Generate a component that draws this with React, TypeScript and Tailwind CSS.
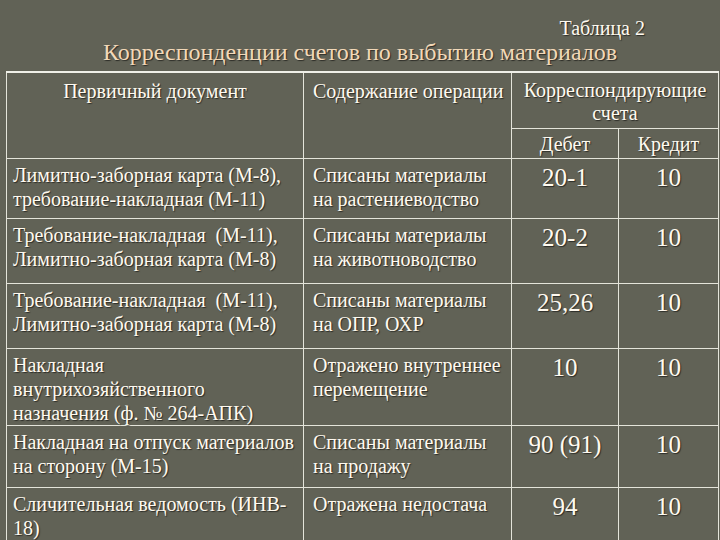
const rows = [
  {
    doc: ['Лимитно-заборная карта (М-8),', 'требование-накладная (М-11)'],
    op: ['Списаны материалы', 'на растениеводство'],
    debit: '20-1',
    credit: '10',
    h: 'h-[60px]',
  },
  {
    doc: ['Требование-накладная  (М-11),', 'Лимитно-заборная карта (М-8)'],
    op: ['Списаны материалы', 'на животноводство'],
    debit: '20-2',
    credit: '10',
    h: 'h-[65px]',
  },
  {
    doc: ['Требование-накладная  (М-11),', 'Лимитно-заборная карта (М-8)'],
    op: ['Списаны материалы', 'на ОПР, ОХР'],
    debit: '25,26',
    credit: '10',
    h: 'h-[65px]',
  },
  {
    doc: ['Накладная', 'внутрихозяйственного', 'назначения (ф. № 264-АПК)'],
    op: ['Отражено внутреннее', 'перемещение'],
    debit: '10',
    credit: '10',
    h: 'h-[77px]',
  },
  {
    doc: ['Накладная на отпуск материалов', 'на сторону (М-15)'],
    op: ['Списаны материалы', 'на продажу'],
    debit: '90 (91)',
    credit: '10',
    h: 'h-[62px]',
  },
  {
    doc: ['Сличительная ведомость (ИНВ-', '18)'],
    op: ['Отражена недостача'],
    debit: '94',
    credit: '10',
    h: 'h-[60px]',
  },
]

function Lines({ lines }: { lines: string[] }) {
  return (
    <>
      {lines.map((l, i) => (
        <div key={i} className="whitespace-pre">
          {l}
        </div>
      ))}
    </>
  )
}

export default function App() {
  const cell = 'border border-[#e4e4da] align-top p-0'
  return (
    <div className="w-[720px] h-[540px] overflow-hidden bg-[#616256] font-['Liberation_Serif',serif] text-[#fffaf0] [text-shadow:1px_1px_1px_rgba(0,0,0,0.55)]">
      <div className="pt-[17px] pr-[75px] text-right text-[20px] leading-[22px]">
        Таблица 2
      </div>
      <h1 className="text-center text-[24px] leading-[28px] text-[#f2d8b8] mt-[-1px]">
        Корреспонденции счетов по выбытию материалов
      </h1>
      <table className="ml-[6px] mt-[5px] table-fixed border-collapse border-t-2 border-[#f0f0e8] text-[20px] leading-[24px]">
        <colgroup>
          <col className="w-[297px]" />
          <col className="w-[208px]" />
          <col className="w-[107px]" />
          <col className="w-[100px]" />
        </colgroup>
        <thead>
          <tr className="h-[56px]">
            <th rowSpan={2} className={`${cell} font-normal text-center pt-[6px]`}>
              Первичный документ
            </th>
            <th rowSpan={2} className={`${cell} font-normal text-left pl-[9px] pt-[6px]`}>
              Содержание операции
            </th>
            <th colSpan={2} className={`${cell} font-normal text-center pt-[6px] leading-[23px]`}>
              Корреспондирующие
              <br />
              счета
            </th>
          </tr>
          <tr className="h-[30px]">
            <th className={`${cell} font-normal text-center pt-[3px]`}>Дебет</th>
            <th className={`${cell} font-normal text-center pt-[3px]`}>Кредит</th>
          </tr>
        </thead>
        <tbody>
          {rows.map((r, i) => (
            <tr key={i} className={r.h}>
              <td className={`${cell} pl-[6px] pt-[4px]`}>
                <Lines lines={r.doc} />
              </td>
              <td className={`${cell} pl-[9px] pt-[4px]`}>
                <Lines lines={r.op} />
              </td>
              <td className={`${cell} text-center text-[25px] leading-[32px] pt-[3px]`}>
                {r.debit}
              </td>
              <td className={`${cell} text-center text-[25px] leading-[32px] pt-[3px]`}>
                {r.credit}
              </td>
            </tr>
          ))}
        </tbody>
      </table>
    </div>
  )
}
